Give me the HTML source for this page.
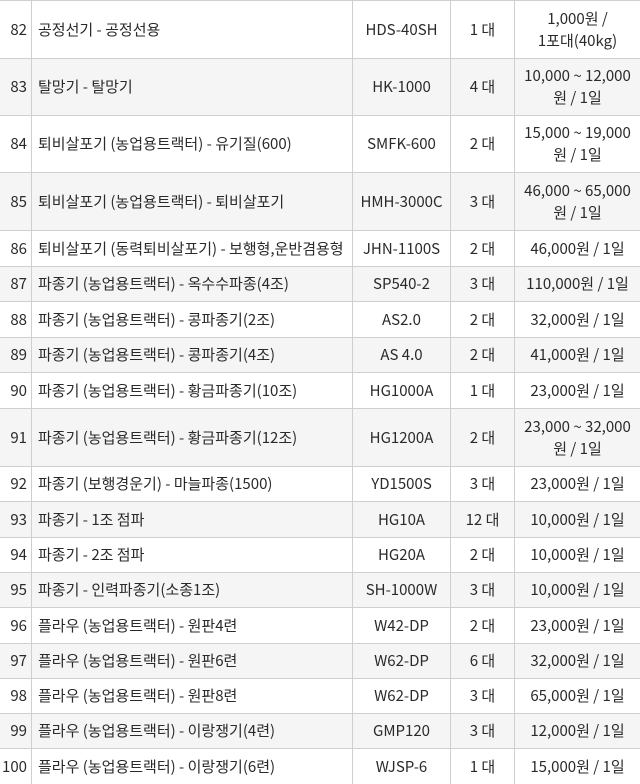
<!DOCTYPE html>
<html><head><meta charset="utf-8"><style>
html,body{margin:0;padding:0;background:#fff;}
body{width:640px;height:783px;overflow:hidden;position:relative;font-family:"Noto Sans CJK KR","Liberation Sans",sans-serif;font-size:15px;color:#2a2a2a;}
.r{position:absolute;left:0;width:640px;border-top:1px solid #cfcfcf;box-sizing:border-box;display:flex;}
.g{background:#f5f5f5;}
.r div{display:flex;align-items:center;box-sizing:border-box;height:100%;line-height:22px;white-space:nowrap;}
.c1{width:32px;justify-content:flex-end;padding-right:4px;border-right:1px solid #cfcfcf;}
.c2{width:321px;padding-left:6px;border-right:1px solid #cfcfcf;}
.c3{width:98px;justify-content:center;border-right:1px solid #cfcfcf;}
.c4{width:64px;justify-content:center;border-right:1px solid #cfcfcf;}
.c5{width:125px;justify-content:center;text-align:center;}
</style></head><body>
<div class="r" style="top:0;height:58px"><div class="c1">82</div><div class="c2">공정선기 - 공정선용</div><div class="c3">HDS-40SH</div><div class="c4">1 대</div><div class="c5">1,000원 /<br>1포대(40kg)</div></div>
<div class="r g" style="top:58px;height:57px"><div class="c1">83</div><div class="c2">탈망기 - 탈망기</div><div class="c3">HK-1000</div><div class="c4">4 대</div><div class="c5">10,000 ~ 12,000<br>원 / 1일</div></div>
<div class="r" style="top:115px;height:57px"><div class="c1">84</div><div class="c2">퇴비살포기 (농업용트랙터) - 유기질(600)</div><div class="c3">SMFK-600</div><div class="c4">2 대</div><div class="c5">15,000 ~ 19,000<br>원 / 1일</div></div>
<div class="r g" style="top:172px;height:58px"><div class="c1">85</div><div class="c2">퇴비살포기 (농업용트랙터) - 퇴비살포기</div><div class="c3">HMH-3000C</div><div class="c4">3 대</div><div class="c5">46,000 ~ 65,000<br>원 / 1일</div></div>
<div class="r" style="top:230px;height:36px"><div class="c1">86</div><div class="c2">퇴비살포기 (동력퇴비살포기) - 보행형,운반겸용형</div><div class="c3">JHN-1100S</div><div class="c4">2 대</div><div class="c5">46,000원 / 1일</div></div>
<div class="r g" style="top:266px;height:35px"><div class="c1">87</div><div class="c2">파종기 (농업용트랙터) - 옥수수파종(4조)</div><div class="c3">SP540-2</div><div class="c4">3 대</div><div class="c5">110,000원 / 1일</div></div>
<div class="r" style="top:301px;height:36px"><div class="c1">88</div><div class="c2">파종기 (농업용트랙터) - 콩파종기(2조)</div><div class="c3">AS2.0</div><div class="c4">2 대</div><div class="c5">32,000원 / 1일</div></div>
<div class="r g" style="top:337px;height:35px"><div class="c1">89</div><div class="c2">파종기 (농업용트랙터) - 콩파종기(4조)</div><div class="c3">AS 4.0</div><div class="c4">2 대</div><div class="c5">41,000원 / 1일</div></div>
<div class="r" style="top:372px;height:36px"><div class="c1">90</div><div class="c2">파종기 (농업용트랙터) - 황금파종기(10조)</div><div class="c3">HG1000A</div><div class="c4">1 대</div><div class="c5">23,000원 / 1일</div></div>
<div class="r g" style="top:408px;height:58px"><div class="c1">91</div><div class="c2">파종기 (농업용트랙터) - 황금파종기(12조)</div><div class="c3">HG1200A</div><div class="c4">2 대</div><div class="c5">23,000 ~ 32,000<br>원 / 1일</div></div>
<div class="r" style="top:466px;height:35px"><div class="c1">92</div><div class="c2">파종기 (보행경운기) - 마늘파종(1500)</div><div class="c3">YD1500S</div><div class="c4">3 대</div><div class="c5">23,000원 / 1일</div></div>
<div class="r g" style="top:501px;height:36px"><div class="c1">93</div><div class="c2">파종기 - 1조 점파</div><div class="c3">HG10A</div><div class="c4">12 대</div><div class="c5">10,000원 / 1일</div></div>
<div class="r" style="top:537px;height:35px"><div class="c1">94</div><div class="c2">파종기 - 2조 점파</div><div class="c3">HG20A</div><div class="c4">2 대</div><div class="c5">10,000원 / 1일</div></div>
<div class="r g" style="top:572px;height:35px"><div class="c1">95</div><div class="c2">파종기 - 인력파종기(소종1조)</div><div class="c3">SH-1000W</div><div class="c4">3 대</div><div class="c5">10,000원 / 1일</div></div>
<div class="r" style="top:607px;height:36px"><div class="c1">96</div><div class="c2">플라우 (농업용트랙터) - 원판4련</div><div class="c3">W42-DP</div><div class="c4">2 대</div><div class="c5">23,000원 / 1일</div></div>
<div class="r g" style="top:643px;height:35px"><div class="c1">97</div><div class="c2">플라우 (농업용트랙터) - 원판6련</div><div class="c3">W62-DP</div><div class="c4">6 대</div><div class="c5">32,000원 / 1일</div></div>
<div class="r" style="top:678px;height:35px"><div class="c1">98</div><div class="c2">플라우 (농업용트랙터) - 원판8련</div><div class="c3">W62-DP</div><div class="c4">3 대</div><div class="c5">65,000원 / 1일</div></div>
<div class="r g" style="top:713px;height:35px"><div class="c1">99</div><div class="c2">플라우 (농업용트랙터) - 이랑쟁기(4련)</div><div class="c3">GMP120</div><div class="c4">3 대</div><div class="c5">12,000원 / 1일</div></div>
<div class="r" style="top:748px;height:36px"><div class="c1">100</div><div class="c2">플라우 (농업용트랙터) - 이랑쟁기(6련)</div><div class="c3">WJSP-6</div><div class="c4">1 대</div><div class="c5">15,000원 / 1일</div></div>
</body></html>
